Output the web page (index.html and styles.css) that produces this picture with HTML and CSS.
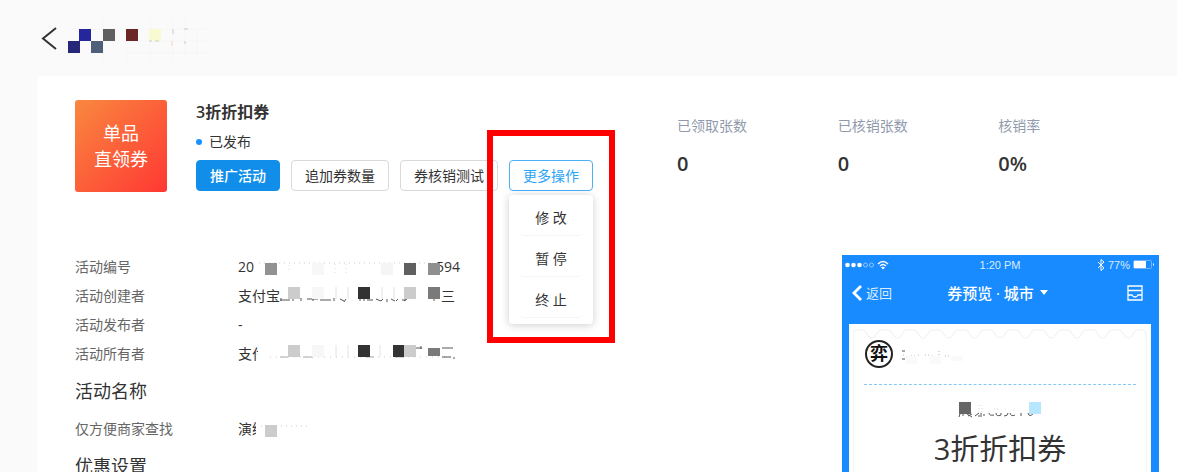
FILE: index.html
```
<!DOCTYPE html>
<html lang="zh-CN">
<head>
    <meta charset="UTF-8">
    <meta name="viewport" content="width=device-width, initial-scale=1.0">
    <title>3折折扣券</title>
    <link rel="stylesheet" href="styles.css">
</head>
<body>
    <header class="page-header">
        <button class="back" type="button" aria-label="返回">
            <svg width="17" height="24" viewBox="0 0 17 24"><path d="M15 2L2 12.500L15 23" fill="none" stroke="#333" stroke-width="2"/></svg>
        </button>
        <svg class="mosaic" width="160" height="48" viewBox="0 0 160 48">
            <g fill="none" stroke="#f6f6f6"><path d="M9 15h139M56 27h92M68 39h80M44 4v44M68 15v33M91 5v43M114 4v43M126 4v40M138 15v30"/></g>
            <rect x="9" y="27" width="12" height="12" fill="#27277a"/>
            <rect x="20" y="15" width="12" height="12" fill="#26269c"/>
            <rect x="32" y="27" width="12" height="12" fill="#4e5f7a"/>
            <rect x="44" y="15" width="12" height="12" fill="#606060"/>
            <rect x="67" y="15" width="12" height="12" fill="#6c2626"/>
            <rect x="90" y="15" width="12" height="12" fill="#f9f9d2"/>
            <path d="M90 27h3M96 27h4M114 15v5M125 15h4M126 27v3" stroke="#ccc" fill="none"/>
            <path d="M113 27v5" stroke="#f3d3bd"/>
        </svg>
    </header>

    <main class="card">
        <section class="summary">
            <div class="tile">单品<br>直领券</div>
            <div class="info">
                <h1>3折折扣券</h1>
                <div class="status">已发布</div>
                <div class="actions">
                    <button class="btn btn-primary" type="button">推广活动</button>
                    <button class="btn" type="button">追加券数量</button>
                    <button class="btn" type="button">券核销测试</button>
                    <div class="more">
                        <button class="btn btn-active" type="button">更多操作</button>
                        <div class="menu">
                            <button type="button">修 改</button>
                            <button type="button">暂 停</button>
                            <button type="button">终 止</button>
                        </div>
                        <div class="callout"></div>
                    </div>
                </div>
            </div>
            <dl class="stats">
                <div><dt>已领取张数</dt><dd>0</dd></div>
                <div><dt>已核销张数</dt><dd>0</dd></div>
                <div><dt>核销率</dt><dd>0%</dd></div>
            </dl>
        </section>

        <div class="content">
            <section class="details">
                <dl>
                    <div class="row">
                        <dt>活动编号</dt>
                        <dd>20<svg class="mosaic" width="182" height="29" viewBox="0 0 182 29">
                            <path d="M5 11H180" stroke="#ccc" stroke-dasharray="1 4"/>
                            <path d="M35 13v8M81 12v10M92 12v10" stroke="#ddd" stroke-dasharray="1 3"/>
                            <rect x="11" y="11" width="12" height="12" fill="#929292"/>
                            <rect x="58" y="11" width="12" height="12" fill="#f7f7f7"/>
                            <rect x="127" y="11" width="12" height="12" fill="#f5f5f5"/>
                            <rect x="150" y="11" width="12" height="12" fill="#606060"/>
                            <rect x="174" y="11" width="12" height="12" fill="#8f8f8f"/>
                        </svg>594</dd>
                    </div>
                    <div class="row">
                        <dt>活动创建者</dt>
                        <dd>支付宝<svg class="mosaic" width="161" height="29" viewBox="0 0 161 29">
                            <path d="M0 19h10M1 17v3M13 17v3M21 17v3M27 18h11M33 18v2M40 19h11M54 17v3M60 18l4 2M66 18l-2 3M80 18v2M84 18v2M87 19h4M92 18v2M96 18l5 2M103 18l-2 2M107 18v3M111 18l4 2M118 18l-2 2M122 19h4M127 18l-3 2M154 17v3" fill="none" stroke="#555"/>
                            <path d="M56 6v12M68 6v12M102 6v12M114 6v12" stroke="#e2e2e2"/>
                            <rect x="8" y="6" width="12" height="12" fill="#ccc"/>
                            <rect x="32" y="6" width="12" height="12" fill="#f7f7f7"/>
                            <rect x="78" y="6" width="12" height="12" fill="#333"/>
                            <rect x="124" y="6" width="12" height="12" fill="#ccc"/>
                            <rect x="148" y="6" width="12" height="12" fill="#7a7a7a"/>
                        </svg>三</dd>
                    </div>
                    <div class="row">
                        <dt>活动发布者</dt>
                        <dd>-</dd>
                    </div>
                    <div class="row">
                        <dt>活动所有者</dt>
                        <dd>支付<svg class="mosaic" width="190" height="29" viewBox="0 0 190 29">
                            <rect x="-8" y="4" width="10" height="21" fill="#fff"/>
                            <path d="M4 18H190" stroke="#ccc" stroke-dasharray="1 5"/>
                            <path d="M14 18h8M37 18h10M100 18h8M129 18h9" stroke="#aaa"/>
                            <path d="M70 6v12M82 6v12M114 6v12" stroke="#e2e2e2"/>
                            <rect x="22" y="6" width="12" height="12" fill="#ccc"/>
                            <rect x="46" y="6" width="12" height="12" fill="#f7f7f7"/>
                            <rect x="92" y="6" width="12" height="12" fill="#333"/>
                            <rect x="127" y="6" width="12" height="12" fill="#333"/>
                            <rect x="138" y="6" width="12" height="12" fill="#ccc"/>
                            <rect x="162" y="9" width="12" height="8" fill="#7a7a7a"/>
                            <path d="M150 9h6M155 7v3M176 9h11M176 18h9M188 18v2" stroke="#555"/>
                        </svg></dd>
                    </div>
                </dl>
                <h2>活动名称</h2>
                <dl>
                    <div class="row">
                        <dt>仅方便商家查找</dt>
                        <dd>演练<svg class="mosaic" width="46" height="29" viewBox="0 0 46 29">
                            <rect x="-10" y="4" width="12" height="21" fill="#fff"/>
                            <path d="M-5 12H44" stroke="#ccc" stroke-dasharray="1 4"/>
                            <rect x="-1" y="11" width="12" height="12" fill="#ccc"/>
                        </svg></dd>
                    </div>
                </dl>
                <h2>优惠设置</h2>
            </section>

            <aside class="phone">
                <div class="phone-status">
                    <svg width="44" height="12" viewBox="0 0 44 12">
                        <g fill="#fff"><circle cx="2.500" cy="6" r="2.300"/><circle cx="8.500" cy="6" r="2.300"/><circle cx="14.500" cy="6" r="2.300"/></g>
                        <g fill="none" stroke="#8fc5ff"><circle cx="20.500" cy="6" r="2"/><circle cx="26.500" cy="6" r="2"/></g>
                        <path d="M33 5q5-5 10 0M35 7q3-3 6 0" fill="none" stroke="#fff" stroke-width="1.400"/>
                        <path d="M36 8.500q2-1.500 4 0l-2 2z" fill="#fff"/>
                    </svg>
                    <span>1:20 PM</span>
                    <div class="battery">
                        <svg width="8" height="12" viewBox="0 0 8 12"><path d="M1 3l6 6-3 2.500V.5L7 3 1 9" fill="none" stroke="#fff"/></svg>
                        <span>77%</span>
                        <svg width="22" height="10" viewBox="0 0 22 10"><rect x=".5" y=".5" width="18" height="8" rx="1" fill="none" stroke="#6cb4ff"/><path d="M1 1h12v7H1z" fill="#fff"/><path d="M20 3q2 1.500 0 3z" fill="#fff"/></svg>
                    </div>
                </div>
                <div class="phone-nav">
                    <a href="#"><svg width="11" height="16" viewBox="0 0 11 16"><path d="M9 1L2 8l7 7" fill="none" stroke="#fff" stroke-width="2.800"/></svg>返回</a>
                    <strong>券预览 · 城市<svg width="8" height="6" viewBox="0 0 8 6"><path d="M0 0h8L4 5z" fill="#fff"/></svg></strong>
                    <svg class="inbox" width="16" height="16" viewBox="0 0 16 16"><path d="M1 1h14v14H1zM1 5.500h14M1 10h4q1 2 3 2t3-2h4" fill="none" stroke="#fff" stroke-width="1.300"/></svg>
                </div>
                <div class="coupon">
                    <svg class="scallop" height="10" viewBox="0 0 298 10" preserveAspectRatio="none">
                        <path d="M0 10V5q0-4 4-4h6c4 0 4 8 9 8s5-8 9-8h8c4 0 4 8 9 8s5-8 9-8h8c4 0 4 8 9 8s5-8 9-8h8c4 0 4 8 9 8s5-8 9-8h8c4 0 4 8 9 8s5-8 9-8h8c4 0 4 8 9 8s5-8 9-8h8c4 0 4 8 9 8s5-8 9-8h8c4 0 4 8 9 8s5-8 9-8h8c4 0 4 8 9 8s5-8 9-8h8c4 0 4 8 9 8s5-8 9-8h8c4 0 4 8 9 8s5-8 9-8h5q4 0 4 4v5" fill="none" stroke="#f5f5f5" stroke-width="1.500"/>
                    </svg>
                    <div class="coupon-body">
                        <div class="brand">
                            <span class="brand-logo">弈</span>
                            <svg class="mosaic" width="64" height="20" viewBox="0 0 64 20">
                                <path d="M1 7h3M1 15h3" stroke="#555"/>
                                <path d="M2 11h1M10 12h4M17 11h3M24 11h4M31 12h3M44 12h4" stroke="#bbb" stroke-dasharray="1 2"/>
                                <path d="M38 7v9" stroke="#aaa" stroke-dasharray="1 2"/>
                                <path d="M4 12h12v8H4zM28 12h12v8H28zM50 12h12v5H50z" fill="#fafafa"/>
                            </svg>
                        </div>
                        <svg class="mosaic coupon-name" width="82" height="36" viewBox="0 0 82 36">
                            <g fill="none" stroke="#555"><path d="M1 29l-1 3M4 28v3M8 29l5 3M13 29l-4 2M16 31l4-3M22 28v4M21 31h-2M25 29v2M30 28q0 3 5 2M37 28q0 4 5 2v-2M45 31q4 0 4-3M51 28q1 4 5 2M62 28v3M69 28q1 5 6 0"/></g>
                            <path d="M20 20v9M23 20v7M35 24h4M46 24h3M54 25h3" stroke="#ddd" stroke-dasharray="1 2"/>
                            <rect y="17" width="12" height="12" fill="#666"/>
                            <rect x="70" y="17" width="12" height="12" fill="#b8e6ff"/>
                        </svg>
                        <div class="coupon-title">3折折扣券</div>
                    </div>
                </div>
            </aside>
        </div>
    </main>
</body>
</html>
```

FILE: styles.css
```
* {
    box-sizing: border-box;
}
body {
    display: flex;
    flex-direction: column;
    height: 100vh;
    margin: 0;
    overflow: hidden;
    background: #fafafa;
    color: #333;
    font-family: "Open Sans", "Noto Sans CJK SC", sans-serif;
    font-size: 14px;
    line-height: 20px;
}
h1, h2, dl, dd {
    margin: 0;
}
button {
    font: inherit;
    color: inherit;
    cursor: pointer;
}
svg {
    flex: none;
    display: block;
}
.mosaic {
    position: relative;
    overflow: visible;
}
.page-header {
    display: flex;
    flex: none;
    align-items: center;
    height: 76px;
    padding-left: 41px;
}
.back {
    display: flex;
    margin-right: 1px;
    padding: 0;
    border: 0;
    background: none;
}
.card {
    display: flex;
    flex: 1;
    flex-direction: column;
    min-height: 0;
    margin-left: 37px;
    padding: 24px 18px 0 38px;
    overflow: hidden;
    border-top-left-radius: 4px;
    background: #fff;
}

/* summary */
.summary {
    display: flex;
    flex: none;
    height: 92px;
}
.tile {
    display: flex;
    align-items: center;
    justify-content: center;
    flex: none;
    width: 92px;
    height: 92px;
    margin-right: 29px;
    border-radius: 3px;
    background: linear-gradient(135deg, #f9883f, #ff3833);
    color: #fff;
    font-size: 18px;
    line-height: 26px;
    text-align: center;
}
.info {
    flex: 1;
}
h1 {
    font-size: 16px;
    font-weight: 600;
    line-height: 24px;
}
.status {
    display: flex;
    align-items: center;
    gap: 7px;
    height: 36px;
}
.status::before {
    content: "";
    width: 6px;
    height: 6px;
    border-radius: 50%;
    background: #1890ff;
}
.actions {
    display: flex;
    gap: 11px;
}
.btn {
    height: 31px;
    padding: 0 13px;
    border: 1px solid #d9d9d9;
    border-radius: 4px;
    background: #fff;
    white-space: nowrap;
}
.btn-primary {
    border-color: #108ee9;
    background: #108ee9;
    color: #fff;
    font-weight: 500;
}
.btn-active {
    border-color: #49b0f8;
    color: #2ba4f5;
}
.more {
    position: relative;
}
.menu {
    position: absolute;
    top: 35px;
    left: 0;
    width: 100%;
    padding: 0 11px 6px;
    border-radius: 4px;
    background: #fff;
    box-shadow: 0 1px 8px rgba(0, 0, 0, 0.2);
}
.menu button {
    display: block;
    width: 100%;
    height: 41px;
    padding: 6px 0 0;
    border: 0;
    border-bottom: 1px solid #f5f5f5;
    border-radius: 4px;
    background: none;
}
.callout {
    position: absolute;
    top: -30px;
    left: -22px;
    width: 128px;
    height: 213px;
    border: 6px solid #f00;
    pointer-events: none;
}
.stats {
    display: grid;
    grid-template-columns: repeat(3, 1fr);
    flex: 0 0 482px;
    padding-top: 16px;
}
.stats dt {
    color: #919aac;
}
.stats dd {
    padding-top: 14px;
    font-size: 20px;
    font-weight: 600;
    line-height: 28px;
}

/* details and preview */
.content {
    display: flex;
    flex: 1;
    justify-content: space-between;
    min-height: 0;
    padding-top: 60px;
}
.row {
    display: flex;
    height: 29px;
    line-height: 29px;
}
.row dt {
    flex: 0 0 163px;
    color: #666;
}
.row dd {
    display: flex;
}
h2 {
    font-size: 18px;
    font-weight: 400;
    line-height: 46px;
}
.phone {
    display: flex;
    flex-direction: column;
    width: 317px;
    margin-top: 3px;
    padding: 0 8px 0 7px;
    background: #178bff;
    color: #fff;
}
.phone-status {
    display: grid;
    grid-template-columns: 1fr auto 1fr;
    align-items: center;
    flex: none;
    height: 20px;
    margin: 0 -4px;
    color: #d9ecff;
    font-family: "Liberation Sans", sans-serif;
    font-size: 11px;
}
.battery {
    display: flex;
    align-items: center;
    justify-content: flex-end;
    gap: 3px;
}
.phone-nav {
    display: grid;
    grid-template-columns: 1fr auto 1fr;
    align-items: center;
    flex: none;
    height: 36px;
    padding: 0 8px 0 3px;
}
.phone-nav a {
    display: flex;
    align-items: center;
    gap: 3px;
    color: #d9ecff;
    font-size: 13px;
    text-decoration: none;
}
.phone-nav strong {
    display: flex;
    align-items: center;
    gap: 6px;
    font-size: 15px;
    font-weight: 500;
}
.inbox {
    justify-self: end;
}
.coupon {
    display: flex;
    flex: 1;
    flex-direction: column;
    margin-top: 13px;
    padding: 5px 4px 0;
    background: #fff;
    color: #333;
}
.scallop {
    width: 100%;
}
.coupon-body {
    flex: 1;
    padding: 0 10px;
    border: solid #f5f5f5;
    border-width: 0 1px;
}
.brand {
    display: flex;
    align-items: center;
    gap: 8px;
    height: 46px;
    padding-bottom: 15px;
    border-bottom: 1px dashed #82c8f7;
}
.brand-logo {
    width: 28px;
    height: 28px;
    margin-left: 1px;
    border: 2px solid #222;
    border-radius: 50%;
    color: #111;
    font-size: 18px;
    font-weight: 700;
    line-height: 23px;
    text-align: center;
}
.coupon-name {
    margin: 0 auto;
}
.coupon-title {
    font-size: 29px;
    line-height: 56px;
    text-align: center;
}
```
